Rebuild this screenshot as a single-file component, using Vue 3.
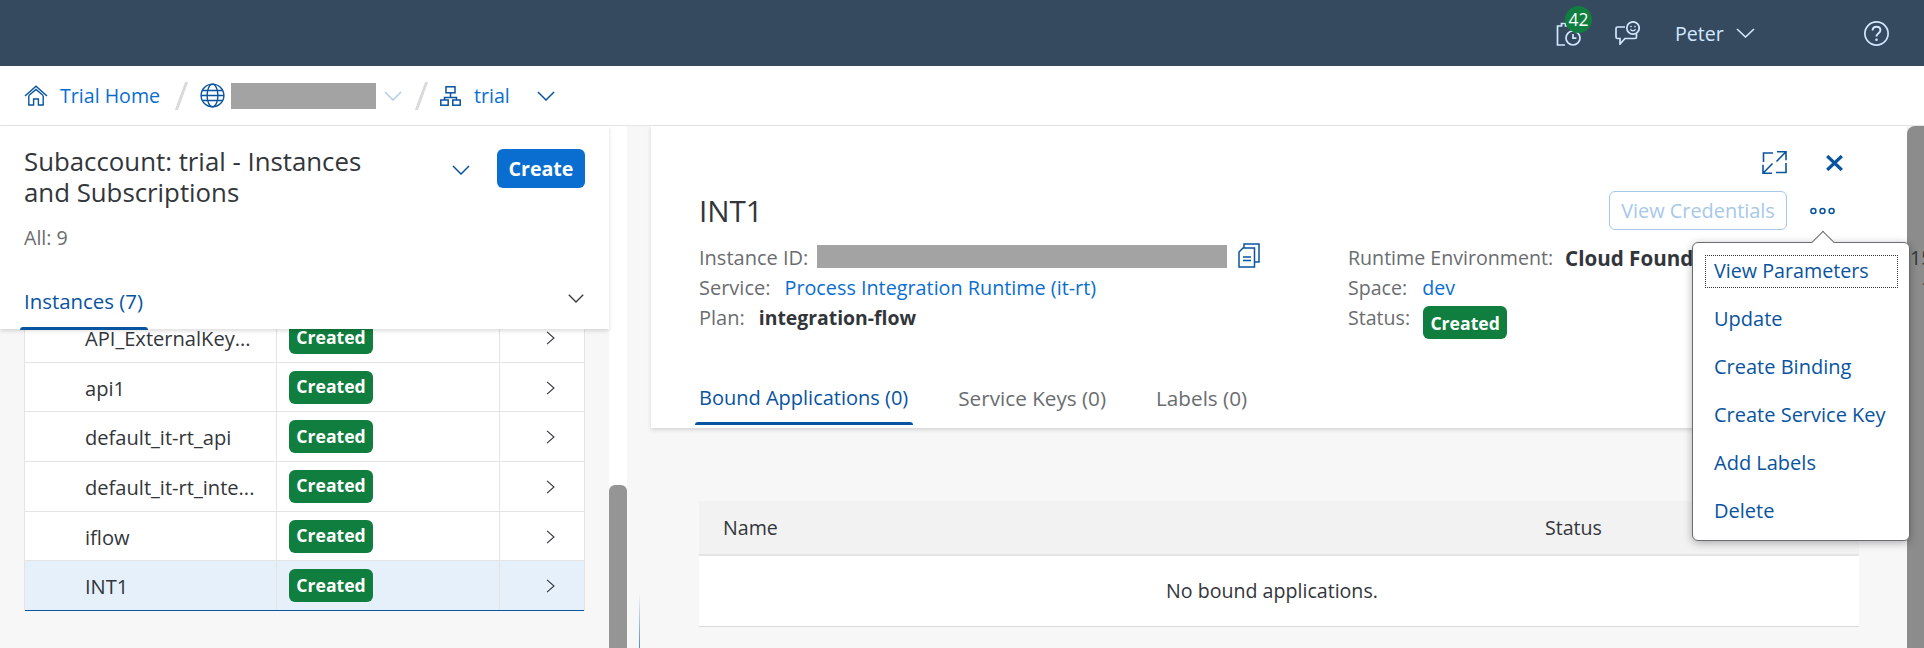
<script setup>
const rows = [
  { name: "API_ExternalKey...", status: "Created" },
  { name: "api1", status: "Created" },
  { name: "default_it-rt_api", status: "Created" },
  { name: "default_it-rt_inte...", status: "Created" },
  { name: "iflow", status: "Created" },
  { name: "INT1", status: "Created", selected: true },
];

const menuItems = ["View Parameters", "Update", "Create Binding", "Create Service Key", "Add Labels", "Delete"];
</script>

<template>
  <div class="page">
    <header class="shell">
      <div class="notif">
        <svg class="shell-icon" viewBox="0 0 25 25" fill="none" stroke="currentColor" stroke-width="1.7">
          <path d="M13 5H9.5V2.5H5.5V5H1.5V24H9" />
          <circle cx="17" cy="17" r="7" />
          <path d="M17 13v4.2h3.4" />
        </svg>
        <span class="badge">42</span>
      </div>
      <svg class="shell-icon feedback" viewBox="0 0 25 24" fill="none" stroke="currentColor" stroke-width="1.7">
        <path d="M10 6H2.5C1.5 6 1 6.6 1 7.5V16c0 1 .6 1.5 1.5 1.5H5V23l5-5.5h10c1 0 1.5-.6 1.5-1.5v-3" />
        <circle cx="18" cy="7" r="6.2" />
        <circle cx="16" cy="5.6" r=".8" fill="currentColor" stroke="none" />
        <circle cx="20" cy="5.6" r=".8" fill="currentColor" stroke="none" />
        <path d="M15.4 8.4c1.2 1.9 4 1.9 5.2 0" stroke-width="1.2" />
      </svg>
      <span class="user">Peter</span>
      <svg class="shell-chevron" viewBox="0 0 19 10" fill="none" stroke="currentColor" stroke-width="1.6">
        <path d="M1 1l8.5 8L18 1" />
      </svg>
      <svg class="shell-icon help" viewBox="0 0 25 25" fill="none" stroke="currentColor" stroke-width="1.7">
        <circle cx="12.5" cy="12.5" r="11.6" />
        <path d="M8.6 9.6c0-2.4 1.8-3.8 3.9-3.8 2.2 0 3.9 1.4 3.9 3.4 0 3-3.9 3-3.9 6.4" stroke-width="1.9" />
        <circle cx="12.5" cy="18.8" r="1.3" fill="currentColor" stroke="none" />
      </svg>
    </header>

    <nav class="crumbs">
      <svg class="home" viewBox="0 0 24 21" fill="none" stroke="currentColor" stroke-width="1.4">
        <path d="M1 11L12 1.2 23 11" />
        <path d="M4.8 10.5L12 4.5l7.2 6" />
        <path d="M4.8 10.5V20H9.6v-6h4.8v6h4.8v-9.5" />
      </svg>
      <a class="crumb-link">Trial Home</a>
      <span class="slash first"></span>
      <svg class="globe" viewBox="0 0 25 25" fill="none" stroke="currentColor" stroke-width="1.4">
        <circle cx="12.5" cy="12.5" r="11.4" />
        <ellipse cx="12.5" cy="12.5" rx="5.4" ry="11.4" />
        <path d="M2.6 7.5h19.8M2.6 17.5h19.8M1.2 12.5h22.6" />
      </svg>
      <span class="mask-name"></span>
      <svg class="chev-light" viewBox="0 0 18 10" fill="none" stroke="currentColor" stroke-width="1.3">
        <path d="M1 1l8 8 8-8" />
      </svg>
      <span class="slash second"></span>
      <svg class="tree" viewBox="0 0 21 20" fill="none" stroke="currentColor" stroke-width="1.5">
        <rect x="6" y=".8" width="9" height="6" />
        <path d="M10.5 6.8v4.6M4.5 14v-2.6h12V14" />
        <rect x=".8" y="14" width="7.4" height="5.2" />
        <rect x="12.8" y="14" width="7.4" height="5.2" />
      </svg>
      <a class="crumb-link trial">trial</a>
      <svg class="chev-blue" viewBox="0 0 18 10" fill="none" stroke="currentColor" stroke-width="1.5">
        <path d="M1 1l8 8 8-8" />
      </svg>
    </nav>

    <main class="main">
      <section class="left">
        <div class="left-head">
          <div class="head-top">
            <h1 class="left-title">Subaccount: trial - Instances and Subscriptions</h1>
            <svg class="title-chevron" viewBox="0 0 18 10" fill="none" stroke="currentColor" stroke-width="1.5">
              <path d="M1 1l8 8 8-8" />
            </svg>
            <button class="create">Create</button>
          </div>
          <div class="count">All: 9</div>
          <div class="left-tabs">
            <span class="tab active">Instances (7)</span>
            <svg class="tabs-chevron" viewBox="0 0 16 9" fill="none" stroke="currentColor" stroke-width="1.3">
              <path d="M.8 .8L8 8l7.2-7.2" />
            </svg>
          </div>
        </div>
        <div class="list">
          <div class="list-table">
            <div v-for="row in rows" :key="row.name" class="list-row" :class="{ selected: row.selected }">
              <div class="cell-name">{{ row.name }}</div>
              <div class="cell-status"><span class="chip">{{ row.status }}</span></div>
              <div class="cell-nav">
                <svg class="row-chevron" viewBox="0 0 9 14" fill="none" stroke="currentColor" stroke-width="1.1">
                  <path d="M1 .8L8 7l-7 6.2" />
                </svg>
              </div>
            </div>
          </div>
        </div>
      </section>

      <div class="left-track"><div class="left-thumb"></div></div>
      <div class="gap"><span class="gap-line"></span></div>

      <section class="right">
        <div class="detail">
          <div class="detail-actions">
            <svg class="expand" viewBox="0 0 25 23" fill="none" stroke="currentColor" stroke-width="1.6">
              <path d="M11 2H1.5v9M24 12v9.5H14" />
              <path d="M15 .8h9v8.4M24 .8L14.5 10.5M1 22.2L10.5 12.5M1 13.8v8.4h9" />
            </svg>
            <svg class="close" viewBox="0 0 17 16" fill="none" stroke="currentColor" stroke-width="3.2">
              <path d="M1.2 1l14.6 14M15.8 1L1.2 15" />
            </svg>
          </div>
          <div class="title-row">
            <h2 class="detail-title">INT1</h2>
            <button class="credentials">View Credentials</button>
            <svg class="dots" viewBox="0 0 25 8" fill="none" stroke="currentColor" stroke-width="1.5">
              <circle cx="3.4" cy="4" r="2.5" />
              <circle cx="12.5" cy="4" r="2.5" />
              <circle cx="21.6" cy="4" r="2.5" />
            </svg>
          </div>

          <div class="meta">
            <div class="meta-col first-col">
              <div class="meta-line">
                <span class="label">Instance ID:</span>
                <span class="mask-id"></span>
                <svg class="copy" viewBox="0 0 22 25" fill="none" stroke="currentColor" stroke-width="1.5">
                  <path d="M6 5V1h15v18h-4" />
                  <path d="M5 5h11.5v19H1V9z" />
                  <path d="M5 14h8M5 17.5h8" stroke-width="1.3" />
                </svg>
              </div>
              <div class="meta-line">
                <span class="label">Service:</span>
                <a class="value-link service">Process Integration Runtime (it-rt)</a>
              </div>
              <div class="meta-line">
                <span class="label">Plan:</span>
                <span class="value-strong plan">integration-flow</span>
              </div>
            </div>
            <div class="meta-col second-col">
              <div class="meta-line">
                <span class="label">Runtime Environment:</span>
                <span class="value-strong cloud">Cloud Foundry</span>
              </div>
              <div class="meta-line">
                <span class="label">Space:</span>
                <a class="value-link dev">dev</a>
              </div>
              <div class="meta-line">
                <span class="label">Status:</span>
                <span class="chip meta-chip">Created</span>
              </div>
            </div>
            <div class="meta-col third-col">
              <div class="meta-line">15</div>
              <div class="meta-line indent">1</div>
            </div>
          </div>

          <div class="detail-tabs">
            <span class="tab active">Bound Applications (0)</span>
            <span class="tab">Service Keys (0)</span>
            <span class="tab">Labels (0)</span>
          </div>
        </div>

        <div class="bound">
          <div class="bound-head">
            <span class="col-name">Name</span>
            <span>Status</span>
          </div>
          <div class="bound-empty">No bound applications.</div>
        </div>
      </section>

      <div class="right-thumb"></div>
    </main>

    <div class="menu">
      <span class="menu-arrow"></span>
      <a v-for="(item, i) in menuItems" :key="item" class="menu-item" :class="{ focused: i === 0 }">{{ item }}</a>
    </div>
  </div>
</template>

<style scoped>
.page {
  position: relative;
  display: flex;
  flex-direction: column;
  width: 1924px;
  height: 648px;
  overflow: hidden;
  background: #fff;
  color: #32363a;
  font-family: "Open Sans", sans-serif;
  font-size: 19.6px;
  line-height: 24px;
}

.shell {
  display: flex;
  align-items: center;
  flex: none;
  height: 66px;
  background: #354a5f;
  color: #d1e8ff;
}

.notif {
  position: relative;
  width: 25px;
  height: 25px;
  margin-left: 1556px;
}

.shell-icon {
  display: block;
  width: 25px;
  height: 25px;
}

.badge {
  position: absolute;
  top: -15px;
  left: 9px;
  display: flex;
  align-items: center;
  justify-content: center;
  width: 27px;
  height: 27px;
  border-radius: 50%;
  background: #107e3e;
  color: #fff;
  font-size: 17.5px;
}

.feedback {
  height: 24px;
  margin-left: 34px;
}

.user {
  margin-top: 2px;
  margin-left: 35px;
}

.shell-chevron {
  width: 19px;
  height: 10px;
  margin-left: 12px;
}

.help {
  margin-left: 109px;
}

.crumbs {
  display: flex;
  align-items: center;
  flex: none;
  height: 59px;
  padding-left: 24px;
  border-bottom: 1px solid #e5e5e5;
  color: #0854a0;
  box-sizing: content-box;
}

.home {
  width: 24px;
  height: 21px;
}

.crumb-link {
  margin-left: 12px;
  color: #0a6ed1;
}

.slash {
  width: 3px;
  height: 28px;
  background: #d9d9d9;
  transform: skewX(-20deg);
}

.slash.first {
  margin-left: 20px;
}

.globe {
  width: 25px;
  height: 25px;
  margin-left: 17px;
}

.mask-name {
  width: 145px;
  height: 26px;
  margin-left: 6px;
  background: #a3a3a3;
}

.chev-light {
  width: 18px;
  height: 10px;
  margin-left: 8px;
  color: #a9c9ea;
}

.slash.second {
  margin-left: 18px;
}

.tree {
  width: 21px;
  height: 20px;
  margin-left: 17px;
}

.crumb-link.trial {
  margin-left: 13px;
}

.chev-blue {
  width: 18px;
  height: 10px;
  margin-left: 27px;
}

.main {
  display: flex;
  flex: 1;
  min-height: 0;
  background: #f7f7f7;
}

.left {
  display: flex;
  flex-direction: column;
  flex: none;
  width: 609px;
}

.left-head {
  position: relative;
  z-index: 1;
  flex: none;
  height: 203px;
  padding-left: 24px;
  box-sizing: border-box;
  background: #fff;
  box-shadow: 0 2px 4px rgba(0, 0, 0, 0.14);
}

.head-top {
  display: flex;
  align-items: flex-start;
  padding-top: 20px;
}

.left-title {
  flex: none;
  width: 370px;
  margin: 0;
  font-size: 25.8px;
  font-weight: 400;
  line-height: 31px;
}

.title-chevron {
  flex: none;
  width: 18px;
  height: 10px;
  margin: 19px 0 0 58px;
  color: #0854a0;
}

.create {
  flex: none;
  width: 88px;
  height: 39px;
  margin: 3px 0 0 27px;
  padding: 0;
  border: 0;
  border-radius: 6px;
  background: #0a6ed1;
  color: #fff;
  font: 700 19.6px "Open Sans", sans-serif;
}

.count {
  margin-top: 18px;
  color: #6a6d70;
}

.left-tabs {
  display: flex;
  justify-content: space-between;
  width: 564px;
  margin: 39px 0 0 -4px;
}

.left-tabs .tab {
  padding-bottom: 17px;
  font-size: 20.4px;
}

.tabs-chevron {
  width: 16px;
  height: 9px;
  margin-top: 5px;
  color: #32363a;
}

.tab {
  position: relative;
  padding: 0 5px 15px 4px;
  color: #6a6d70;
  font-size: 20.7px;
}

.tab.active {
  color: #0854a0;
}

.detail-tabs .tab.active {
  font-size: 20px;
}

.tab.active::after {
  content: "";
  position: absolute;
  right: 0;
  bottom: 0;
  left: 0;
  height: 3px;
  border-radius: 3px 3px 0 0;
  background: #0854a0;
}

.list {
  flex: 1;
  min-height: 0;
  overflow: hidden;
  padding-left: 24px;
}

.list-table {
  width: 561px;
  margin-top: -15.8px;
  border-right: 1px solid #e4e4e4;
  border-left: 1px solid #e4e4e4;
  box-sizing: border-box;
}

.list-row {
  display: flex;
  height: 49.6px;
  border-bottom: 1px solid #e4e4e4;
  box-sizing: border-box;
  background: #fff;
}

.list-row.selected {
  border-bottom: 1px solid #0854a0;
  background: #e5f0fa;
}

.cell-name {
  flex: none;
  width: 252px;
  padding: 3px 0 0 60px;
  box-sizing: border-box;
  border-right: 1px solid #e4e4e4;
  font-size: 20.1px;
  line-height: 46px;
}

.cell-status {
  flex: none;
  width: 223px;
  padding: 8px 0 0 12px;
  box-sizing: border-box;
  border-right: 1px solid #e4e4e4;
}

.cell-nav {
  flex: 1;
  padding: 18px 0 0 46px;
}

.row-chevron {
  display: block;
  width: 9px;
  height: 14px;
}

.chip {
  display: flex;
  align-items: center;
  justify-content: center;
  width: 84px;
  height: 33px;
  padding-bottom: 2px;
  box-sizing: border-box;
  border-radius: 6px;
  background: #107e3e;
  color: #fff;
  font-size: 17.6px;
  font-weight: 700;
}

.left-track {
  flex: none;
  width: 18px;
  background: #fff;
}

.left-thumb {
  height: 163px;
  margin-top: 359px;
  border-radius: 6px 6px 0 0;
  background: #959595;
}

.gap {
  position: relative;
  flex: none;
  width: 24px;
}

.gap-line {
  position: absolute;
  top: 467px;
  left: 12px;
  width: 1px;
  height: 55px;
  background: linear-gradient(#f7f7f7, #4d8fd1);
}

.right {
  flex: none;
  width: 1256px;
}

.detail {
  display: flex;
  flex-direction: column;
  height: 302px;
  padding-left: 48px;
  box-sizing: border-box;
  background: #fff;
  box-shadow: 0 2px 4px rgba(0, 0, 0, 0.14);
}

.detail-actions {
  display: flex;
  align-items: center;
  justify-content: flex-end;
  gap: 39px;
  height: 23px;
  padding: 25px 64px 0 0;
  color: #0854a0;
  box-sizing: content-box;
}

.expand {
  width: 25px;
  height: 23px;
}

.close {
  width: 17px;
  height: 16px;
}

.title-row {
  display: flex;
  align-items: center;
  height: 39px;
  margin-top: 17px;
  padding-right: 72px;
}

.detail-title {
  flex: 1;
  margin: 0;
  font-size: 29.6px;
  font-weight: 400;
  line-height: 39px;
}

.credentials {
  width: 178px;
  height: 39px;
  padding: 0;
  border: 1px solid #a6c8ea;
  border-radius: 6px;
  background: #fff;
  color: #a6c8ea;
  font: 400 19.9px "Open Sans", sans-serif;
}

.dots {
  width: 25px;
  height: 8px;
  margin-left: 23px;
  color: #0854a0;
}

.meta {
  display: flex;
  margin-top: 13px;
  height: 90px;
}

.meta-col {
  flex: none;
}

.first-col {
  width: 649px;
  font-size: 20px;
}

.second-col {
  position: relative;
  width: 562px;
}

.third-col {
  position: relative;
  z-index: 2;
  width: 40px;
}

.meta-line {
  display: flex;
  align-items: flex-start;
  height: 30px;
  line-height: 30px;
  white-space: nowrap;
}

.indent {
  padding-left: 11px;
}

.label {
  color: #6a6d70;
}

.value-link {
  margin-left: 13px;
  color: #0a6ed1;
}

.value-link.service {
  margin-left: 14px;
  font-size: 19.8px;
}

.value-link.dev {
  margin-left: 15px;
}

.value-strong {
  margin-left: 12px;
  font-size: 19.4px;
  font-weight: 700;
}

.value-strong.plan {
  margin-left: 14px;
}

.value-strong.cloud {
  font-size: 20.6px;
}

.mask-id {
  width: 410px;
  height: 23px;
  margin: 2px 0 0 9px;
  background: #a3a3a3;
}

.copy {
  width: 22px;
  height: 25px;
  margin-left: 11px;
  color: #0854a0;
}

.meta-chip {
  margin: 3px 0 0 13px;
  padding-bottom: 0;
}

.detail-tabs {
  display: flex;
  gap: 41px;
  margin-top: 53px;
  margin-left: -4px;
}

.bound {
  margin: 73px 48px 0;
}

.bound-head {
  display: flex;
  align-items: center;
  height: 55px;
  border-bottom: 2px solid #e4e4e4;
  box-sizing: border-box;
  background: #f2f2f2;
}

.col-name {
  width: 822px;
  margin-left: 24px;
}

.bound-empty {
  display: flex;
  align-items: center;
  justify-content: center;
  height: 71px;
  padding-right: 14px;
  border-bottom: 1px solid #d9d9d9;
  box-sizing: border-box;
  background: #fff;
}

.right-thumb {
  flex: none;
  width: 17px;
  border-radius: 8px 0 0 0;
  background: #8c8c8c;
}

.menu {
  position: absolute;
  top: 242px;
  left: 1692px;
  z-index: 5;
  display: flex;
  flex-direction: column;
  gap: 15px;
  width: 218px;
  height: 299px;
  padding: 12px 11px 0 12px;
  box-sizing: border-box;
  border: 1px solid #6a6d70;
  border-radius: 6px;
  background: #fff;
  box-shadow: 0 2px 8px rgba(0, 0, 0, 0.3);
}

.menu-arrow {
  position: absolute;
  top: -9px;
  left: 122px;
  width: 16px;
  height: 16px;
  border-top: 1px solid #6a6d70;
  border-left: 1px solid #6a6d70;
  box-sizing: border-box;
  background: #fff;
  transform: rotate(45deg);
}

.menu-item {
  flex: none;
  height: 33px;
  padding-left: 9px;
  color: #0854a0;
  font-size: 20px;
  line-height: 31px;
  white-space: nowrap;
}

.menu-item.focused {
  border: 1px dotted #32363a;
  padding-left: 8px;
  font-size: 19.7px;
  line-height: 30px;
  box-sizing: border-box;
}
</style>
